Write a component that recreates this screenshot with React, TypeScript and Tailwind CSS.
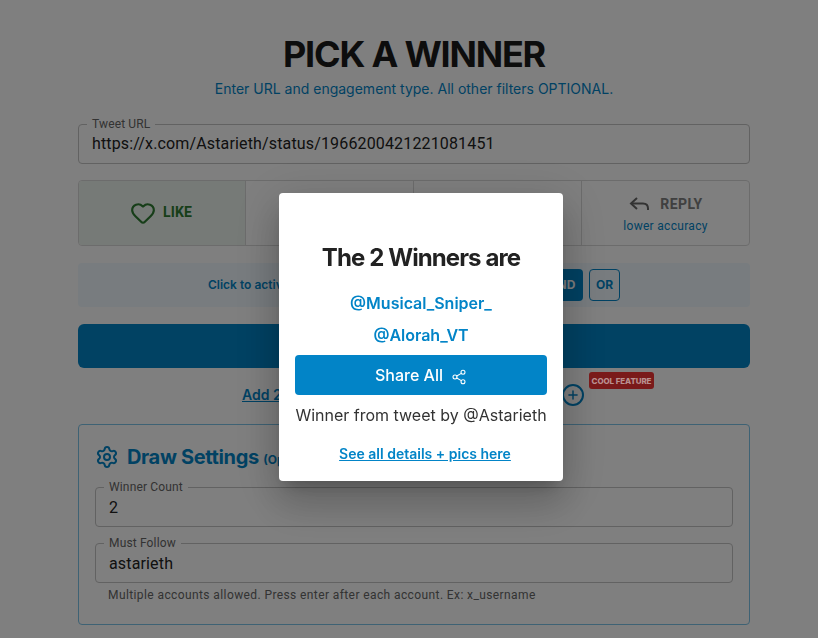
import { Heart, Settings, Share2, Plus } from 'lucide-react';

const inter = "font-['Inter',sans-serif]";
const roboto = "font-['Roboto',sans-serif]";

function OutlinedField({ label, value, className }: { label: string; value: string; className: string }) {
  return (
    <fieldset className={`rounded border border-[#c4c4c4] px-2 ${roboto} ${className}`}>
      <legend className="px-[5px] text-xs leading-[9px] tracking-[0.15px] text-[#666]">{label}</legend>
      <div className="px-[5px] pt-[3px] text-base leading-6 tracking-[0.15px] text-[#222]">{value}</div>
    </fieldset>
  );
}

function EngagementButton({ children, active, sub }: { children?: React.ReactNode; active?: boolean; sub?: string }) {
  return (
    <div className={`flex h-full flex-col items-center justify-center border-r border-[#d9d9d9] last:border-r-0 ${active ? 'bg-[#edf5ee]' : ''} ${sub ? 'pb-[2px]' : ''}`}>
      <div className="flex items-center gap-[7px]">{children}</div>
      {sub && <div className={`mt-[3px] text-xs leading-[14px] tracking-[0.3px] text-[#0284c7] ${roboto}`}>{sub}</div>}
    </div>
  );
}

export default function App() {
  return (
    <div className={`h-[638px] overflow-hidden bg-white ${inter}`}>
      <main className="ml-[78px] w-[672px] pt-[33px]">
        <h1 className="text-center text-[36px] font-bold leading-[42px] tracking-[-1.2px] text-[#1a1a1a]">PICK A WINNER</h1>
        <p className="mt-[4px] text-center text-sm leading-5 text-[#0284c7]">
          Enter URL and engagement type. All other filters OPTIONAL.
        </p>

        <OutlinedField label="Tweet URL" value="https://x.com/Astarieth/status/1966200421221081451" className="mt-[21px] h-11" />

        <div className="mt-4 grid h-[66px] grid-cols-[167px_168px_168px_1fr] overflow-hidden rounded border border-[#d9d9d9]">
          <EngagementButton active>
            <Heart size={26} strokeWidth={2} className="-ml-[2px] text-[#2e7d32]" />
            <span className={`-translate-y-px text-sm font-bold tracking-[0.2px] text-[#2e7d32] ${roboto}`}>LIKE</span>
          </EngagementButton>
          <EngagementButton />
          <EngagementButton />
          <EngagementButton sub="lower accuracy">
            <svg width="24" height="24" viewBox="0 0 24 24" fill="none" stroke="#666" strokeWidth="2" className="mr-[1px]">
              <path d="M9 6 3 11.5 9 17" />
              <path d="M3 11.5h12c3 0 5 2 5 5v1.5" />
            </svg>
            <span className={`text-sm font-bold tracking-[0.4px] text-[#808080] ${roboto}`}>REPLY</span>
          </EngagementButton>
        </div>

        <div className="mt-[17px] flex h-11 items-center rounded bg-[#f0f9ff] pl-[130px]">
          <span className="text-xs font-semibold text-[#0284c7]">Click to activate</span>
          <div className="ml-auto mr-[130px] flex gap-[6px]">
            <span className="flex h-8 w-[46px] items-center justify-center rounded bg-[#0284c7] pl-1 text-xs font-bold text-white">AND</span>
            <span className="flex h-8 w-[31px] items-center justify-center rounded border border-[#0284c7] text-xs font-bold text-[#0284c7]">OR</span>
          </div>
        </div>

        <div className="mt-[17px] h-11 rounded-md bg-[#0284c7]" />

        <div className="relative mt-[15px] flex h-6 items-center pl-[164px]">
          <span className="text-sm font-semibold text-[#0284c7] underline">Add 2nd</span>
          <span className="absolute left-[484px] top-[1px] flex h-[22px] w-[22px] items-center justify-center rounded-full border-2 border-[#0284c7]">
            <Plus size={14} strokeWidth={2.5} className="text-[#0284c7]" />
          </span>
          <span className="absolute left-[511px] top-[-11px] z-10 flex h-[17px] w-[65px] items-center justify-center rounded-[3px] bg-[#7a1a1a] text-[8px] font-extrabold tracking-[-0.1px] text-[#b89090]">COOL FEATURE</span>
        </div>

        <section className="mt-[17px] h-[201px] rounded border border-[#7dc4e8] px-4 pt-[16px]">
          <div className="flex items-center gap-[8px]">
            <Settings size={24} className="text-[#0284c7]" />
            <h2 className="text-[20px] font-bold leading-[32px] tracking-[-0.35px] text-[#0284c7]">
              Draw Settings <span className="text-xs font-bold tracking-normal">(Optional)</span>
            </h2>
          </div>
          <OutlinedField label="Winner Count" value="2" className="mt-[10px] h-11 pt-px" />
          <OutlinedField label="Must Follow" value="astarieth" className="mt-3 h-11 pt-px" />
          <p className={`mt-1 pl-[13px] text-xs leading-4 tracking-[0.4px] text-[#666] ${roboto}`}>
            Multiple accounts allowed. Press enter after each account. Ex: x_username
          </p>
        </section>
      </main>

      <div className="fixed inset-0 flex items-center justify-center bg-black/50 pl-6 pt-9">
        <div className="flex h-[288px] w-[284px] flex-col items-center rounded bg-white px-4 pt-[49px] shadow-[0_11px_15px_-7px_rgba(0,0,0,0.2),0_24px_38px_3px_rgba(0,0,0,0.14),0_9px_46px_8px_rgba(0,0,0,0.12)]">
          <h3 className="text-2xl font-bold leading-8 tracking-[-0.9px] text-[#222]">The 2 Winners are</h3>
          <a className="mt-[17px] text-base font-semibold leading-6 text-[#0284c7]">@Musical_Sniper_</a>
          <a className="mt-2 text-base font-semibold leading-6 text-[#0284c7]">@Alorah_VT</a>
          <button className="mt-2 flex h-10 w-full items-center justify-center gap-2 rounded bg-[#0284c7] text-base font-medium text-white">
            Share All <Share2 size={16} strokeWidth={1.6} className="mt-[3px]" />
          </button>
          <p className="mt-2 whitespace-nowrap text-base leading-6 text-[#333]">Winner from tweet by @Astarieth</p>
          <a className="ml-2 mt-[17px] text-sm font-semibold leading-5 text-[#0284c7] underline">See all details + pics here</a>
        </div>
      </div>
    </div>
  );
}
